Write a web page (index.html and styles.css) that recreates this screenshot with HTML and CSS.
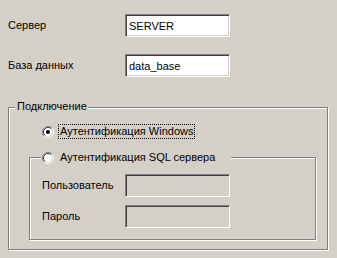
FILE: index.html
```html
<!DOCTYPE html>
<html lang="ru">
<head>
<meta charset="utf-8">
<link rel="stylesheet" href="styles.css">
</head>
<body>
<div class="dialog">
  <div class="field row-server">
    <span class="label">Сервер</span>
    <input class="edit" type="text" value="SERVER">
  </div>
  <div class="field row-db">
    <span class="label">База данных</span>
    <input class="edit" type="text" value="data_base">
  </div>

  <div class="group outer">
    <span class="group-title outer-title">Подключение</span>
    <div class="radio-row first">
      <svg class="radio" width="12" height="12" viewBox="0 0 12 12">
        <circle cx="6" cy="6" r="4.5" fill="#fff"/>
        <path d="M9.89 2.11 A5.5 5.5 0 0 0 2.11 9.89" fill="none" stroke="#808080"/>
        <path d="M2.11 9.89 A5.5 5.5 0 0 0 9.89 2.11" fill="none" stroke="#fff"/>
        <path d="M9.18 2.82 A4.5 4.5 0 0 0 2.82 9.18" fill="none" stroke="#404040"/>
        <path d="M2.82 9.18 A4.5 4.5 0 0 0 9.18 2.82" fill="none" stroke="#d4d0c8"/>
        <circle cx="6" cy="6" r="2" fill="#000"/>
      </svg>
      <span class="radio-label focused">Аутентификация Windows</span>
    </div>

    <div class="group inner">
      <div class="group-title inner-title radio-row">
        <svg class="radio" width="12" height="12" viewBox="0 0 12 12">
          <circle cx="6" cy="6" r="4.5" fill="#fff"/>
          <path d="M9.89 2.11 A5.5 5.5 0 0 0 2.11 9.89" fill="none" stroke="#808080"/>
          <path d="M2.11 9.89 A5.5 5.5 0 0 0 9.89 2.11" fill="none" stroke="#fff"/>
          <path d="M9.18 2.82 A4.5 4.5 0 0 0 2.82 9.18" fill="none" stroke="#404040"/>
          <path d="M2.82 9.18 A4.5 4.5 0 0 0 9.18 2.82" fill="none" stroke="#d4d0c8"/>
        </svg>
        <span class="radio-label">Аутентификация SQL сервера</span>
      </div>
      <div class="inner-grid">
        <span class="label">Пользователь</span>
        <input class="edit disabled" type="text" disabled>
        <span class="label">Пароль</span>
        <input class="edit disabled" type="password" disabled>
      </div>
    </div>
  </div>
</div>
</body>
</html>
```

FILE: styles.css
```css
html, body {
  margin: 0;
  padding: 0;
  background: #d4d0c8;
}
body {
  width: 337px;
  height: 258px;
  overflow: hidden;
  font-family: "Liberation Sans", Arial, sans-serif;
  font-size: 11px;
  color: #000;
}
.dialog {
  display: flex;
  flex-direction: column;
  padding: 14px 0 0 8px;
}
.field {
  display: grid;
  grid-template-columns: 117px 105px;
  align-items: center;
  height: 23px;
}
.row-db {
  margin-top: 17px;
}
.label {
  line-height: 13px;
  white-space: nowrap;
}
.edit {
  box-sizing: border-box;
  width: 105px;
  height: 23px;
  margin: 0;
  padding: 0 3px;
  border: 1px solid;
  border-color: #808080 #fff #fff #808080;
  box-shadow: inset 1px 1px 0 #404040, inset -1px -1px 0 #d4d0c8;
  background: #fff;
  font-family: "Liberation Sans", Arial, sans-serif;
  font-size: 11px;
  color: #000;
  outline: none;
  -webkit-appearance: none;
  appearance: none;
}
.edit.disabled {
  background: #d4d0c8;
}
.group {
  position: relative;
  box-sizing: border-box;
  border: 1px solid #808080;
  box-shadow: inset 1px 1px 0 #fff, 1px 1px 0 #fff;
}
.group.outer {
  width: 320px;
  height: 143px;
  margin-top: 30px;
  padding: 16px 0 9px 0;
}
.group-title {
  position: absolute;
  background: #d4d0c8;
  line-height: 13px;
  white-space: nowrap;
}
.outer-title {
  left: 6px;
  top: -8px;
  padding: 0 1px 0 2px;
}
.radio-row {
  display: flex;
  align-items: center;
  height: 15px;
}
.radio-row.first {
  padding-left: 33px;
}
.radio {
  display: block;
  flex: none;
}
.radio-label {
  margin-left: 4px;
  padding: 0 1px;
  line-height: 13px;
  border: 1px solid transparent;
}
.radio-label.focused {
  border: 1px dotted #000;
}
.group.inner {
  width: 287px;
  height: 83px;
  margin: 18px 0 0 20px;
  padding: 16px 0 11px 12px;
}
.inner-title {
  left: 11px;
  top: -8px;
  padding: 0 14px 0 1px;
}
.inner-grid {
  display: grid;
  grid-template-columns: 83px 105px;
  grid-auto-rows: 23px;
  row-gap: 8px;
  align-items: center;
}
```
